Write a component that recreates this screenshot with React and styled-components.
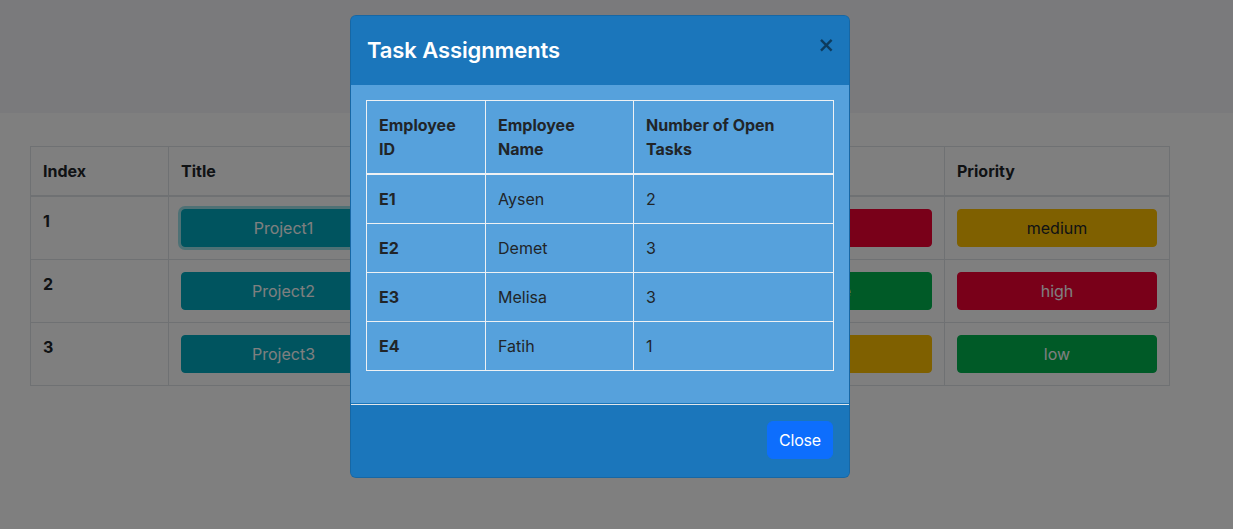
import React from "react";
import styled, { createGlobalStyle } from "styled-components";

const Global = createGlobalStyle`
  html, body { margin: 0; padding: 0; }
  body {
    font-family: Inter, "Noto Sans", "Liberation Sans", sans-serif;
    font-size: 16px;
    line-height: 1.5;
    color: #212529;
    background: #ffffff;
  }
  * { box-sizing: border-box; }
`;

const Page = styled.div`
  min-height: 529px;
`;

const TopBar = styled.header`
  height: 113px;
  background: #f4f5f8;
`;

const Content = styled.main`
  padding: 33px 64px 0 30px;
`;

const DataTable = styled.table`
  width: 100%;
  border-collapse: collapse;
  table-layout: fixed;
  border: 1px solid #dee2e6;
`;

const HeadCell = styled.th`
  text-align: left;
  font-weight: 700;
  padding: 12px;
  border: 1px solid #dee2e6;
  border-bottom: 2px solid #dee2e6;
  vertical-align: bottom;
  width: ${(p) => p.$w}px;
`;

const RowHead = styled.th`
  text-align: left;
  font-weight: 700;
  padding: 12px;
  border: 1px solid #dee2e6;
  vertical-align: top;
`;

const Cell = styled.td`
  padding: 12px;
  border: 1px solid #dee2e6;
  vertical-align: top;
`;

const tones = {
  info: { bg: "#00a9be", fg: "#ffffff" },
  danger: { bg: "#f20033", fg: "#ffffff" },
  success: { bg: "#00b44f", fg: "#ffffff" },
  warning: { bg: "#ffc000", fg: "#212529" },
};

const TagButton = styled.button`
  display: block;
  width: 100%;
  height: 38px;
  border: 1px solid ${(p) => tones[p.$tone].bg};
  border-radius: 4px;
  background: ${(p) => tones[p.$tone].bg};
  color: ${(p) => tones[p.$tone].fg};
  font: inherit;
  font-size: 16px;
  padding: 6px 12px;
  box-shadow: ${(p) => (p.$focus ? "0 0 0 3px rgba(60, 200, 215, 0.5)" : "none")};
`;

const Backdrop = styled.div`
  position: fixed;
  inset: 0;
  background: rgba(0, 0, 0, 0.5);
  padding: 15px 0 0 350px;
`;

const Dialog = styled.div`
  width: 500px;
  border: 1px solid rgba(0, 0, 0, 0.12);
  border-radius: 6px;
  overflow: hidden;
  background: #1b76bb;
`;

const DialogHeader = styled.div`
  display: flex;
  align-items: center;
  justify-content: space-between;
  padding: 19px 16px 20px 16px;
  background: #1b76bb;
`;

const DialogTitle = styled.h5`
  margin: 0;
  font-size: 22px;
  font-weight: 600;
  line-height: 30px;
  color: #ffffff;
  letter-spacing: -0.1px;
`;

const CloseX = styled.button`
  border: 0;
  background: transparent;
  padding: 0;
  margin: -10px -2px 0 0;
  font-family: "DejaVu Sans", sans-serif;
  font-size: 21px;
  font-weight: 700;
  line-height: 1;
  color: #000000;
  opacity: 0.5;
`;

const DialogBody = styled.div`
  background: #56a1dc;
  padding: 15px 16px 16px 15px;
  border-bottom: 1px solid #1b76bb;
`;

const TaskTable = styled.table`
  width: 467px;
  border-collapse: collapse;
  table-layout: fixed;
  margin-bottom: 16px;
  color: #212529;
`;

const TaskHead = styled.th`
  text-align: left;
  font-weight: 700;
  padding: 12px;
  border: 1px solid #eef1f4;
  border-bottom: 2px solid #eef1f4;
  vertical-align: top;
  width: ${(p) => p.$w}px;
`;

const TaskRowHead = styled.th`
  text-align: left;
  font-weight: 700;
  padding: 12px;
  border: 1px solid #eef1f4;
`;

const TaskCell = styled.td`
  padding: 12px;
  border: 1px solid #eef1f4;
`;

const DialogFooter = styled.div`
  display: flex;
  justify-content: flex-end;
  padding: 12px 12px 14px;
  border-top: 1px solid #e3e6ea;
  background: #1b76bb;
`;

const PrimaryButton = styled.button`
  margin: 4px;
  height: 38px;
  padding: 6px 11px;
  border: 1px solid #0d6efd;
  border-radius: 6px;
  background: #0d6efd;
  color: #ffffff;
  font: inherit;
  font-size: 16px;
  letter-spacing: -0.2px;
`;

const projects = [
  { i: 1, title: "Project1", status: "danger", statusText: "late", prio: "warning", prioText: "medium", focus: true },
  { i: 2, title: "Project2", status: "success", statusText: "done", prio: "danger", prioText: "high" },
  { i: 3, title: "Project3", status: "warning", statusText: "wait", prio: "success", prioText: "low" },
];

const assignments = [
  { id: "E1", name: "Aysen", open: 2 },
  { id: "E2", name: "Demet", open: 3 },
  { id: "E3", name: "Melisa", open: 3 },
  { id: "E4", name: "Fatih", open: 1 },
];

export default function App() {
  return (
    <>
      <Global />
      <Page>
        <TopBar />
        <Content>
          <DataTable>
            <thead>
              <tr>
                <HeadCell $w={138}>Index</HeadCell>
                <HeadCell $w={230}>Title</HeadCell>
                <HeadCell $w={321}>Description</HeadCell>
                <HeadCell $w={225}>Status</HeadCell>
                <HeadCell $w={225}>Priority</HeadCell>
              </tr>
            </thead>
            <tbody>
              {projects.map((p) => (
                <tr key={p.i}>
                  <RowHead>{p.i}</RowHead>
                  <Cell>
                    <TagButton $tone="info" $focus={p.focus}>{p.title}</TagButton>
                  </Cell>
                  <Cell />
                  <Cell>
                    <TagButton $tone={p.status}>{p.statusText}</TagButton>
                  </Cell>
                  <Cell>
                    <TagButton $tone={p.prio}>{p.prioText}</TagButton>
                  </Cell>
                </tr>
              ))}
            </tbody>
          </DataTable>
        </Content>
        <Backdrop>
          <Dialog>
            <DialogHeader>
              <DialogTitle>Task Assignments</DialogTitle>
              <CloseX aria-label="Close">×</CloseX>
            </DialogHeader>
            <DialogBody>
              <TaskTable>
                <thead>
                  <tr>
                    <TaskHead $w={119}>Employee ID</TaskHead>
                    <TaskHead $w={148}>Employee Name</TaskHead>
                    <TaskHead $w={200}>Number of Open Tasks</TaskHead>
                  </tr>
                </thead>
                <tbody>
                  {assignments.map((a) => (
                    <tr key={a.id}>
                      <TaskRowHead>{a.id}</TaskRowHead>
                      <TaskCell>{a.name}</TaskCell>
                      <TaskCell>{a.open}</TaskCell>
                    </tr>
                  ))}
                </tbody>
              </TaskTable>
            </DialogBody>
            <DialogFooter>
              <PrimaryButton>Close</PrimaryButton>
            </DialogFooter>
          </Dialog>
        </Backdrop>
      </Page>
    </>
  );
}
